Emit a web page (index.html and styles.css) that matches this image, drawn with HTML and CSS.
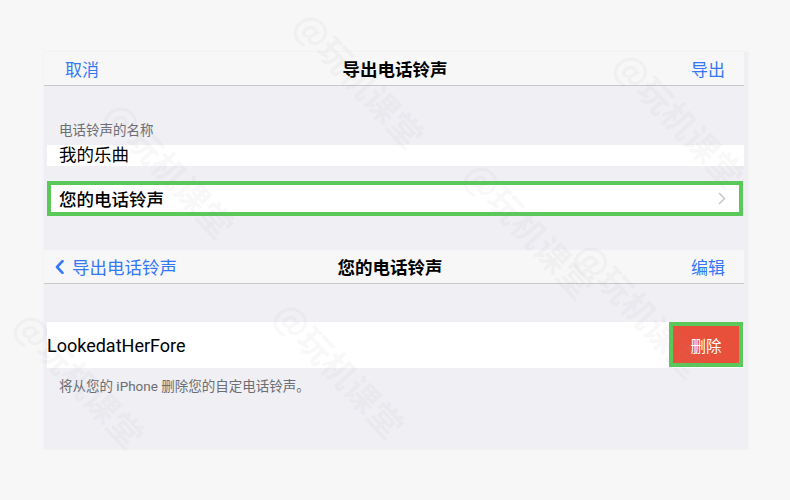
FILE: index.html
```html
<!DOCTYPE html>
<html lang="zh-CN">
<head>
	<meta charset="UTF-8">
	<title>导出电话铃声</title>
	<link rel="stylesheet" href="styles.css">
</head>

<body>
	<div class="panel">
		<!-- 第一页：导出 -->
		<div class="navbar">
			<span class="nav-left">取消</span>
			<span class="nav-title">导出电话铃声</span>
			<span class="nav-right">导出</span>
		</div>
		<div class="section-label">电话铃声的名称</div>
		<div class="row row-name">我的乐曲</div>
		<div class="row row-link">
			<span>您的电话铃声</span>
			<svg class="chevron" width="8" height="13" viewBox="0 0 8 13"><path d="M1 1 L6.5 6.5 L1 12" fill="none" stroke="#c7c7cc" stroke-width="1.5"/></svg>
		</div>

		<!-- 第二页：您的电话铃声 -->
		<div class="navbar navbar-2">
			<span class="nav-left back">
				<svg width="9" height="14" viewBox="0 0 9 14"><path d="M7.5 1.2 L2 7 L7.5 12.8" fill="none" stroke="#3478f6" stroke-width="2.6" stroke-linecap="round" stroke-linejoin="round"/></svg>
				导出电话铃声
			</span>
			<span class="nav-title">您的电话铃声</span>
			<span class="nav-right">编辑</span>
		</div>
		<div class="row row-tone">
			<span class="tone-name">LookedatHerFore</span>
			<span class="delete-wrap"><span class="delete">删除</span></span>
		</div>
		<div class="footnote">将从您的 iPhone 删除您的自定电话铃声。</div>
	</div>

	<div class="watermarks">
		<span class="wm" style="left:130px;top:90px">@玩机课堂</span>
		<span class="wm" style="left:320px;top:0px">@玩机课堂</span>
		<span class="wm" style="left:490px;top:150px">@玩机课堂</span>
		<span class="wm" style="left:640px;top:40px">@玩机课堂</span>
		<span class="wm" style="left:300px;top:290px">@玩机课堂</span>
		<span class="wm" style="left:600px;top:230px">@玩机课堂</span>
		<span class="wm" style="left:40px;top:300px">@玩机课堂</span>
	</div>
</body>

</html>
```

FILE: styles.css
```css
html,
body {
	margin: 0;
	height: 100%;
	overflow: hidden;
}
body {
	background: #f7f7f7;
	font-family: Roboto, "Noto Sans CJK SC", sans-serif;
	padding: 52px 0 0 44px;
	box-sizing: border-box;
	position: relative;
}

/*面板*/
.panel {
	width: 704px;
	height: 397px;
	background: #efeff4;
	display: flex;
	flex-direction: column;
	box-shadow: 0 0 2px rgba(0, 0, 0, 0.06);
}

/*导航栏*/
.navbar {
	height: 33px;
	margin-right: 4px;
	background: #f7f7f8;
	border-bottom: 1px solid #c8c7cc;
	display: grid;
	grid-template-columns: 1fr auto 1fr;
	align-items: center;
	padding: 0 19px 0 21px;
	font-size: 17px;
}
.nav-left,
.nav-right {
	color: #3478f6;
}
.nav-right {
	justify-self: end;
}
.nav-title {
	font-weight: 600;
	color: #000;
	font-size: 17.5px;
}
.navbar-2 {
	margin-top: 34px;
	padding-left: 11px;
}
.back {
	display: flex;
	align-items: center;
	gap: 8px;
	font-size: 17.5px;
}

/*表单*/
.section-label {
	padding: 36px 0 7px 15px;
	line-height: 16px;
	font-size: 13.5px;
	color: #6d6d72;
}
.row {
	background: #fff;
	margin: 0 4px 0 3px;
	font-size: 17.5px;
	color: #000;
}
.row-name {
	height: 21px;
	line-height: 21px;
	padding-left: 12px;
}
.row-link {
	margin: 15px 5px 0 3px;
	height: 27px;
	border: 4px solid #5bc85a;
	padding: 0 13px 0 8px;
	display: flex;
	align-items: center;
	justify-content: space-between;
	font-weight: 500;
}

/*铃声列表*/
.row-tone {
	margin-top: 38px;
	height: 46px;
	display: flex;
	align-items: center;
	justify-content: space-between;
}
.tone-name {
	font-size: 18px;
}
.delete-wrap {
	align-self: stretch;
	width: 66px;
	margin: 0 1px 1px 0;
	border: 4px solid #5bc85a;
	display: flex;
}
.delete {
	flex: 1;
	background: #e9503c;
	color: #fff;
	font-size: 15.5px;
	display: flex;
	align-items: center;
	justify-content: center;
}
.footnote {
	padding: 10px 0 0 15px;
	line-height: 16px;
	font-size: 13.5px;
	color: #6d6d72;
}

/*水印*/
.watermarks {
	position: absolute;
	top: 0;
	left: 0;
	right: 0;
	bottom: 0;
	pointer-events: none;
}
.wm {
	position: absolute;
	font-size: 34px;
	font-weight: 700;
	color: rgba(150, 150, 150, 0.07);
	transform: rotate(47deg);
	transform-origin: 0 0;
	white-space: nowrap;
	font-family: "Noto Sans CJK SC", sans-serif;
}
```
